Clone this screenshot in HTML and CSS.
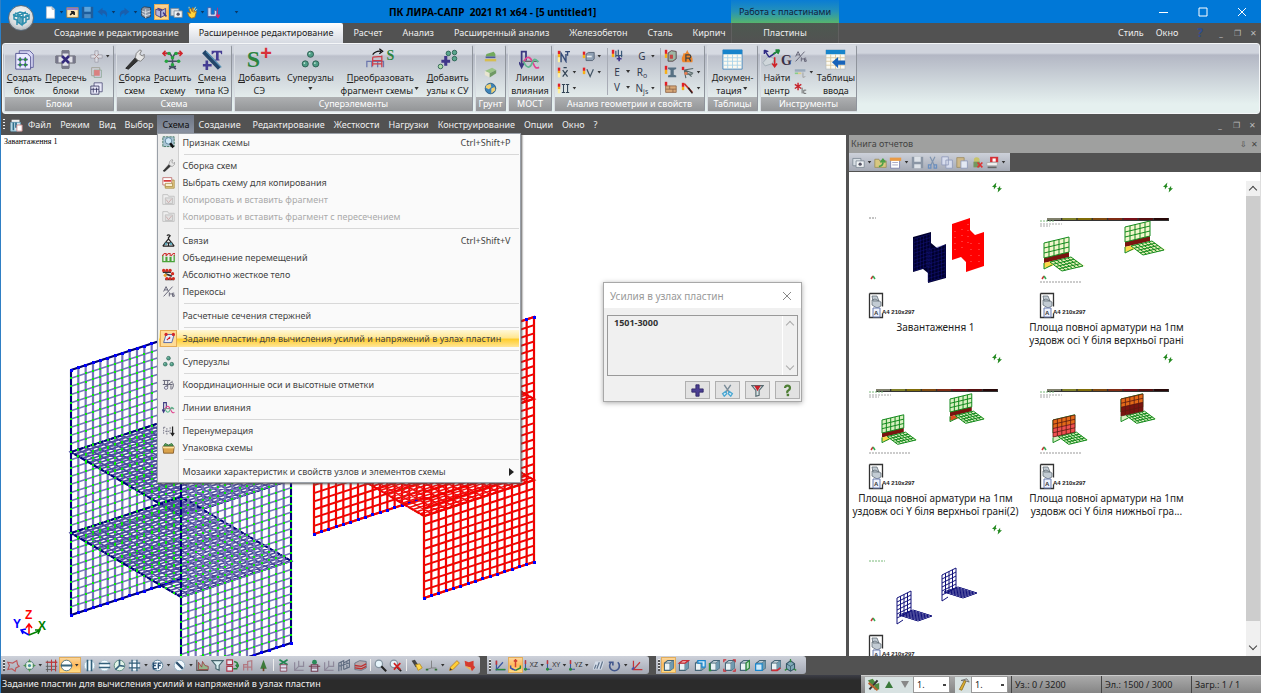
FILE: index.html
```html
<!DOCTYPE html>
<html lang="ru">
<head>
<meta charset="utf-8">
<title>ПК ЛИРА-САПР 2021 R1 x64 - [5 untitled1]</title>
<link rel="stylesheet" href="styles.css">
</head>
<body>
<svg class="sprite" aria-hidden="true">
  <!-- quick access -->
  <symbol id="new" viewBox="0 0 16 16"><path d="M3 1h7l3 3v11H3z" fill="#fff" stroke="#b9c3d0"/><path d="M10 1v3h3" fill="none" stroke="#8a97a8"/></symbol>
  <symbol id="open" viewBox="0 0 16 16"><path d="M1 2h14v12H1z" fill="#ffe9b8" stroke="#a77b32"/><path d="M1 2h14v3H1z" fill="#8f7bc8"/><path d="M5 11l5-4M10 7H6m4 0v4" stroke="#222" stroke-width="2" fill="none"/></symbol>
  <symbol id="save" viewBox="0 0 16 16"><path d="M1 1h14v14H1z" fill="#1d5d9c"/><path d="M4 1h8v6H4z" fill="#5ea5dc"/><path d="M4 10h8v5H4z" fill="#4d8dc4"/></symbol>
  <symbol id="undo" viewBox="0 0 16 16"><path d="M2 7l6-5v3c5 0 7 4 5 9-1-4-3-5-5-5v3z" fill="#195fae"/></symbol>
  <symbol id="redo" viewBox="0 0 16 16"><path d="M14 7L8 2v3c-5 0-7 4-5 9 1-4 3-5 5-5v3z" fill="#195fae"/></symbol>
  <symbol id="stack" viewBox="0 0 16 16"><path d="M5 1l8 1v11l-6 2-5-3V3z" fill="#8995a5" stroke="#333c48"/><path d="M2 6l5 2 6-2M2 9l5 3 6-2M7 4v11" stroke="#e4e9ee" fill="none"/></symbol>
  <symbol id="book" viewBox="0 0 16 16"><path d="M1 4l6 2v8l-6-3zM7 6l6-3v8l-6 3z" fill="#b5b7dc" stroke="#3b3a7e"/><path d="M3 3l6 2M10 8l4 5" stroke="#443a8c" stroke-width="2"/></symbol>
  <symbol id="camera" viewBox="0 0 16 16"><path d="M1 3h10v9H1z" fill="#d9dfe5" stroke="#7b8893"/><path d="M5 6h10v8H5z" fill="#f1f4f6" stroke="#7b8893"/><circle cx="10" cy="10" r="2" fill="#556"/></symbol>
  <symbol id="hand" viewBox="0 0 16 16"><path d="M3 8l2 5 3 2 4-1 2-7-2-1-1 2V3L9 2v5L7 3 5 4l2 5z" fill="#ffd43a" stroke="#b06a14"/><path d="M13 1l-2 4M15 4l-3 2M5 1v2" stroke="#fff2a0"/></symbol>
  <symbol id="chart" viewBox="0 0 16 16"><path d="M1 2h4v8h4V5l3 1v7H1z" fill="#c9d9ef" stroke="#445ca6"/><path d="M1 14h10" stroke="#445ca6"/><path d="M13 2v9M11 11h5l-2.500 4z" stroke="#d8256a" fill="#d8256a"/></symbol>
  <!-- large ribbon icons -->
  <symbol id="blockNew" viewBox="0 0 24 24"><path d="M6 2h12l4 4v15H6z" fill="#d8d8f4" stroke="#5a5a9c"/><path d="M2 5h13l4 4v14H2z" fill="#ececff" stroke="#49498a"/><g stroke="#6a6ac0" stroke-width="1.500"><path d="M4 12h12M4 18h12M7 9v12M13 9v12"/></g><g fill="#2d8a3c"><circle cx="7" cy="12" r="1.800"/><circle cx="13" cy="12" r="1.800"/><circle cx="7" cy="18" r="1.800"/><circle cx="13" cy="18" r="1.800"/></g></symbol>
  <symbol id="cross" viewBox="0 0 24 24"><path d="M8 2h8v6h7v8h-7v6H8v-6H1V8h7z" fill="#e1e1e8" stroke="#50505c"/><path d="M8 2h8v3H8zM8 19h8v3H8zM1 8h3v8H1zM20 8h3v8h-3z" fill="#77778a"/><path d="M8 8l8 8M16 8l-8 8" stroke="#352b7c" stroke-width="3"/></symbol>
  <symbol id="wrench" viewBox="0 0 24 24"><path d="M2 22L13 10l3 3L5 23z" fill="#333" stroke="#222"/><path d="M13 10l1-5 4-4 2 1-2 4 3 2 2-2v4l-4 4-3-1z" fill="#e6e6e6" stroke="#777"/></symbol>
  <symbol id="sew" viewBox="0 0 24 24"><path d="M4 5h5l3 5 3-5h5M12 10v12M5 14h14M8 20h8M8 23l4-3 4 3" fill="none" stroke="#445064" stroke-width="1.800"/><path d="M1 5h5M18 5h5M4 2L1 5l3 3M20 2l3 3-3 3" stroke="#d0242b" stroke-width="1.800" fill="none"/><g fill="#25a43f"><circle cx="8" cy="5" r="2"/><circle cx="16" cy="5" r="2"/><circle cx="12" cy="10" r="2"/><circle cx="5" cy="14" r="2"/><circle cx="19" cy="14" r="2"/><circle cx="12" cy="18" r="2"/></g></symbol>
  <symbol id="typeT" viewBox="0 0 24 24"><path d="M2 3l18 19" stroke="#23466a" stroke-width="5"/><path d="M5 3l17 18" stroke="#5792b4" stroke-width="1.500"/><path d="M11 2h12v4h-1l-1-2h-2v8h1v1h-5v-1h1V4h-2l-2 2h-1zM1 17h3v-4h3v4h4v3H7v4H4v-4H1z" fill="#443c93"/></symbol>
  <symbol id="nodes3" viewBox="0 0 24 24"><g fill="#4f9d86" stroke="#28594d"><circle cx="12" cy="6" r="3.500"/><circle cx="6" cy="17" r="3.500"/><circle cx="18" cy="17" r="3.500"/></g><g fill="#bfe6d6"><circle cx="11" cy="5" r="1"/><circle cx="5" cy="16" r="1"/><circle cx="17" cy="16" r="1"/></g></symbol>
  <symbol id="chair" viewBox="0 0 24 24"><path d="M1 23v-7h20v7M14 16v7M7 16v7" fill="none" stroke="#6b76ad" stroke-width="1.500"/><path d="M8 11v11M19 9v14M8 15h11M8 19h11M8 11l11-1" fill="none" stroke="#cf3c47" stroke-width="1.500"/><path d="M8 8q4-5 10-4M16 1l4 3-4 3" fill="none" stroke="#111" stroke-width="1.500"/></symbol>
  <symbol id="addNodes" viewBox="0 0 24 24"><g fill="#58a58c" stroke="#286050"><circle cx="13" cy="5" r="2.600"/><circle cx="20" cy="4" r="2.600"/><circle cx="20" cy="11" r="2.600"/><circle cx="4" cy="20" r="2.600" fill="#b0dba8"/></g><path d="M10 8v11M5 14h10" stroke="#40368a" stroke-width="3.500"/></symbol>
  <symbol id="influence" viewBox="0 0 24 24"><path d="M3 2v18M0 15l3 6 3-6M3 3h5v10" fill="none" stroke="#3b3880" stroke-width="2"/><path d="M4 14h18" stroke="#333"/><path d="M5 16c4-10 8-7 11 0s4 6 7 5" fill="none" stroke="#e0448f" stroke-width="2"/><path d="M5 14c4 9 8 8 10 2s4-5 7-1" fill="none" stroke="#5eb88e" stroke-width="2"/></symbol>
  <symbol id="tableDoc" viewBox="0 0 24 24"><path d="M1 1h22v22H1z" fill="#fdfaf0" stroke="#4385ba"/><path d="M1 1h22v5H1z" fill="#1784cb"/><path d="M6.500 6v17M12 6v17M17.500 6v17M1 10h22M1 14h22M1 18.500h22" stroke="#a8d2e8"/></symbol>
  <symbol id="centerG" viewBox="0 0 24 24"><path d="M1 18l7-8 8 3-3 6-9 3z" fill="#cfd6da" stroke="#9ba7af"/><path d="M9 11L3 2M9 11l13-9M3 2l0 5M3 2l5 2" stroke="#2e2984" stroke-width="1.800" fill="none"/><path d="M14 7l8-5M22 2l-5 0M22 2l-2 5" stroke="#208a3b" stroke-width="2"/><path d="M16 11v11M13 19l3 4 3-4" stroke="#d02329" stroke-width="2" fill="none"/></symbol>
  <symbol id="tableIn" viewBox="0 0 24 24"><path d="M1 1h22v22H1z" fill="#fdfaf0" stroke="#b4bbc4"/><path d="M1 1h22v5H1z" fill="#1784cb"/><path d="M6.500 6v17M12 6v17M17.500 6v17M1 10h22M1 14h22M1 18.500h22" stroke="#d8c8a0"/><path d="M8 15l7-6v4h8v5h-8v4z" fill="#1763b9"/></symbol>
  <!-- small ribbon icons -->
  <symbol id="xsmall" viewBox="0 0 16 16"><path d="M6 1h4v5h5v4h-5v5H6v-5H1V6h5z" fill="#dcdce2" stroke="#a0a0ac"/><path d="M5 5l6 6M11 5l-6 6" stroke="#a88" /></symbol>
  <symbol id="sq" viewBox="0 0 16 16"><path d="M2 2h10v10H2z" fill="#cfcfd6" stroke="#9d9c90"/><path d="M5 5h9v9H5z" fill="#ccd" stroke="#8aa894"/><path d="M5 5h7v7H5z" fill="#d98080"/></symbol>
  <symbol id="blocks3" viewBox="0 0 16 16"><path d="M5 1h10v11H5z" fill="#e8e8f8" stroke="#4d4d78"/><path d="M1 5h10v10H1z" fill="#e8e8f8" stroke="#33335c"/><path d="M4 7v6M8 7v6M1 9h10" stroke="#33335c"/></symbol>
  <symbol id="soil" viewBox="0 0 16 16"><path d="M3 5l9-3 2 3v3H2z" fill="#72a95d"/><path d="M2 8h12v2H2z" fill="#4d5b9b"/><path d="M1 11h14v3H1z" fill="#d6bd50"/></symbol>
  <symbol id="brick" viewBox="0 0 16 16"><path d="M1 6l9-4 5 3-8 4z" fill="#9ac487"/><path d="M1 6l6 3v5l-6-3z" fill="#e8e5d0"/><path d="M7 9l8-4v4l-8 5z" fill="#6f9964"/></symbol>
  <symbol id="globe" viewBox="0 0 16 16"><circle cx="8" cy="8" r="6.500" fill="#3d83b8" stroke="#23567c"/><path d="M3 4l5-2 1 4-3 3-4-2zM9 8l4-2 1 4-5 4z" fill="#f1d070"/></symbol>
  <symbol id="barN" viewBox="0 0 16 16"><path d="M1 1h3v4H1z" fill="#e21f26"/><path d="M1 5h3v4H1z" fill="#f7b018"/><path d="M1 9h3v6H1z" fill="#fff0a0"/><path d="M5 15V4l6 10V5M10 2h6M13 2v5" fill="none" stroke="#344a78" stroke-width="1.700"/></symbol>
  <symbol id="barX" viewBox="0 0 16 16"><path d="M1 2h3v4H1z" fill="#e21f26"/><path d="M1 6h3v3H1z" fill="#f7b018"/><path d="M1 9h3v5H1z" fill="#fff0a0"/><path d="M7 5l6 8M13 5l-6 8M8 2h4" stroke="#345" stroke-width="1.500"/></symbol>
  <symbol id="barI" viewBox="0 0 16 16"><path d="M1 2h3v4H1z" fill="#e21f26"/><path d="M1 6h3v3H1z" fill="#f7b018"/><path d="M1 9h3v5H1z" fill="#fff0a0"/><path d="M6 3h4M6 13h4M11 3h4M11 13h4M8 3v10M13 3v10" stroke="#345" stroke-width="1.300"/></symbol>
  <symbol id="barS" viewBox="0 0 16 16"><path d="M1 2h3v4H1z" fill="#e21f26"/><path d="M1 6h3v4H1z" fill="#f7b018"/><path d="M5 5l3-2h7v8l-2 2H5z" fill="#8fa0b4" stroke="#4c5a6c"/><path d="M6 8h6" stroke="#e9edf0" stroke-width="2"/></symbol>
  <symbol id="barV" viewBox="0 0 16 16"><path d="M1 2h3v4H1z" fill="#e21f26"/><path d="M1 6h3v4H1z" fill="#f7b018"/><path d="M6 4l4 9 4-9" fill="none" stroke="#456" stroke-width="1.500"/></symbol>
  <symbol id="bars" viewBox="0 0 16 16"><path d="M1 1h3v5H1z" fill="#e21f26"/><path d="M1 6h3v4H1z" fill="#f7b018"/><path d="M6 2v8M9 1v9M13 2v8M6 8h8" stroke="#3a5878" stroke-width="1.500"/><path d="M10 9v6M7 12h6" stroke="#40368a" stroke-width="2"/></symbol>
  <symbol id="cube" viewBox="0 0 16 16"><path d="M1 1h3v5H1z" fill="#e21f26"/><path d="M1 6h3v5H1z" fill="#f7b018"/><path d="M5 5l4-3 6 1v9l-4 3H5z" fill="#9db6a4" stroke="#4d3438"/><path d="M7 7h4v5H7z" fill="#c34545"/></symbol>
  <symbol id="beamI" viewBox="0 0 16 16"><path d="M1 1h3v5H1z" fill="#e21f26"/><path d="M1 6h3v5H1z" fill="#f7b018"/><path d="M5 3h10v2l-3 1v6l3 1v2H5v-2l3-1V6L5 5z" fill="#577083"/></symbol>
  <symbol id="wall" viewBox="0 0 16 16"><path d="M1 1h3v5H1z" fill="#e21f26"/><path d="M2 6h13v8H2z" fill="#d8a878" stroke="#8c6246"/><path d="M2 10h13M7 6v4M11 10v4" stroke="#8c6246"/></symbol>
  <symbol id="fireR" viewBox="0 0 16 16"><path d="M2 15C-1 9 3 8 3 4c4 1 3-2 5-4 0 5 8 6 6 15z" fill="#f0862a"/><path d="M6 14V6h4q2 0 2 2t-2 2H6m4 0l2 4" fill="none" stroke="#444" stroke-width="1.500"/></symbol>
  <symbol id="rays" viewBox="0 0 16 16"><path d="M1 1h3v4H1z" fill="#e21f26"/><path d="M4 5l11-2M4 5l9 8M4 5l2 10M5 10h9M4 5l11 4" fill="none" stroke="#566" stroke-width="1.300"/><circle cx="6" cy="9" r="2" fill="#e57c52"/></symbol>
  <symbol id="diag" viewBox="0 0 16 16"><path d="M1 1h3v5H1z" fill="#e21f26"/><path d="M1 6h3v4H1z" fill="#f7b018"/><path d="M4 2l10 11" stroke="#c83227" stroke-width="2"/><path d="M9 7l5 7" stroke="#322" stroke-width="2"/></symbol>
  <symbol id="skew" viewBox="0 0 16 16"><path d="M2 14L13 2M2 8l3-6 3 6M3 6h4M9 9v5M9 11h4v3M15 10h-2v2h2v2h-2" fill="none" stroke="#667" stroke-width="1.200"/></symbol>
  <symbol id="legend" viewBox="0 0 16 16"><path d="M1 4h13v3H1z" fill="#9ab"/><path d="M1 8h4v2H1z" fill="#8c8"/><path d="M5 8h4v2H5z" fill="#dc8"/><path d="M11 8v6l3-1" stroke="#999" fill="none"/></symbol>
  <symbol id="starIc" viewBox="0 0 16 16"><path d="M5 1v9M1 3l8 5M9 3L1 8" stroke="#c7232b" stroke-width="1.800"/><path d="M10 7v7M15 10h-3v4h3" stroke="#555" fill="none"/></symbol>
  <!-- menu icons -->
  <symbol id="mSign" viewBox="0 0 16 16"><path d="M1 1h14v12H1z" fill="#a9c5d3" stroke="#336b54" stroke-dasharray="3 1"/><circle cx="8" cy="6" r="4" fill="#cfe8f8" stroke="#4d7890"/><path d="M10 9l4 5" stroke="#111" stroke-width="3"/></symbol>
  <symbol id="mSheets" viewBox="0 0 16 16"><path d="M4 5h11v10H4z" fill="#e4cf8a" stroke="#aa8b45"/><path d="M1 2h11v9H1z" fill="#fff" stroke="#b66"/><path d="M2 5h9v2H2z" fill="#d32d2d"/><path d="M4 9h9v4H4z" fill="#f8efd0" stroke="#aa8b45"/></symbol>
  <symbol id="mGray" viewBox="0 0 16 16"><path d="M1 2h6l1 2h7v10H1z" fill="#eee" stroke="#bbb"/><path d="M4 6h9v7H4z" fill="#e0e0e0" stroke="#bbb"/><path d="M5 8l3 4 4-5" stroke="#c9a4a4" fill="none"/></symbol>
  <symbol id="mTie" viewBox="0 0 16 16"><path d="M6 2q2-2 4 0-1 2-2 2v3M8 6l-4 5h8zM1 15h14M4 11l-3 4M12 11l3 4M8 11v4" stroke="#222" stroke-width="1.500" fill="none"/><circle cx="5" cy="12" r="1.500" fill="#5aa5b8"/><circle cx="11" cy="12" r="1.500" fill="#5aa5b8"/></symbol>
  <symbol id="mJoin" viewBox="0 0 16 16"><path d="M1 5v8h4V7M6 7v6h4V7M11 7v6h4V5" fill="none" stroke="#49a338" stroke-width="1.600"/><path d="M0 6l3-3h2v3M5 6l3-3h2v3M11 6l3-3h2v3" stroke="#d03030" stroke-width="1.300" fill="none"/></symbol>
  <symbol id="mRigid" viewBox="0 0 16 16"><path d="M1 5h10M4 7l8 3M4 14h11" stroke="#333" stroke-width="2"/><g fill="#d22a1f"><circle cx="2" cy="3" r="2"/><circle cx="6" cy="3" r="2"/><circle cx="10" cy="3" r="2"/><circle cx="13" cy="7" r="2"/><circle cx="4" cy="9" r="2" fill="#e8a12b"/><circle cx="6" cy="13" r="2"/><circle cx="10" cy="13" r="2"/><circle cx="14" cy="13" r="2"/></g></symbol>
  <symbol id="mPlate" viewBox="0 0 16 16"><path d="M5 3h10l-3 10H2z" fill="#e9eef9" stroke="#3b55a0"/><g fill="#d3242a"><circle cx="5" cy="3" r="2"/><circle cx="14" cy="3" r="2"/></g><path d="M6 10l4-4M8 8h2" stroke="#d3242a" stroke-width="1.500"/></symbol>
  <symbol id="mAxes" viewBox="0 0 16 16"><path d="M1 3h9M3 3v5M7 3v8M1 8h12M3 12l10-8M11 9v5M12 5q4 3 0 9" fill="none" stroke="#667" stroke-width="1.200"/><circle cx="5" cy="12" r="2" fill="#eef" stroke="#667"/></symbol>
  <symbol id="mNum" viewBox="0 0 16 16"><path d="M2 4v9M2 4h3M6 5v8M10 4v9M4 9h5" stroke="#667" fill="none" stroke-dasharray="2 1"/><path d="M13 3v10M11 11l2 3 2-3" stroke="#222" stroke-width="1.500" fill="none"/></symbol>
  <symbol id="mBox" viewBox="0 0 16 16"><path d="M1 7h14l-1 8H2z" fill="#d9a24b" stroke="#7d5320"/><path d="M2 6l2-3 4 2 4-2 2 3z" fill="#5fa55b" stroke="#2c6632"/><path d="M1 8h14" stroke="#fbe29c" stroke-width="2"/></symbol>
  <!-- view toolbar -->
  <symbol id="poly" viewBox="0 0 16 16"><path d="M1 4l6 1 5-3 1 5 2 2-4 2-1 4-4-3-5 1 2-5z" fill="none" stroke="#bc5658" stroke-width="1.400"/></symbol>
  <symbol id="target" viewBox="0 0 16 16"><circle cx="8" cy="8" r="5" fill="#e9f6e9" stroke="#456b7a"/><path d="M8 0l2 4H6zM8 16l2-4H6zM0 8l4-2v4zM16 8l-4-2v4z" fill="#4e9253"/><circle cx="8" cy="8" r="2" fill="#4b91a4"/></symbol>
  <symbol id="grid" viewBox="0 0 16 16"><path d="M3 2v14M8 1v14M13 1v14M1 4h14M1 9h14M1 13h12" stroke="#555"/><path d="M1 4h14M8 1v14M13 1v14" stroke="#c43538" stroke-width="1.300"/></symbol>
  <symbol id="cH" viewBox="0 0 16 16"><circle cx="8" cy="8" r="6.500" fill="#fff" stroke="#39647c"/><path d="M1 8h14" stroke="#39647c" stroke-width="2.500"/></symbol>
  <symbol id="cV2" viewBox="0 0 16 16"><circle cx="8" cy="8" r="6.500" fill="#f4fbff" stroke="#a9c4d1"/><path d="M5.500 1v14M10.500 1v14" stroke="#335f7a" stroke-width="2"/></symbol>
  <symbol id="cH2" viewBox="0 0 16 16"><circle cx="8" cy="8" r="6.500" fill="#f4fbff" stroke="#a9c4d1"/><path d="M1 5.500h14M1 10.500h14" stroke="#335f7a" stroke-width="2"/></symbol>
  <symbol id="cArr" viewBox="0 0 16 16"><circle cx="8" cy="8" r="6.500" fill="#e4f5e9" stroke="#4c7f73"/><path d="M8 1v7l6 1M8 8l-5 5" stroke="#335f7a" stroke-width="2" fill="none"/></symbol>
  <symbol id="cHash" viewBox="0 0 16 16"><circle cx="8" cy="8" r="6.500" fill="#f4fbff" stroke="#a9c4d1"/><path d="M5 1v14M11 1v14M1 5h14M1 11h14" stroke="#335f7a" stroke-width="1.600"/></symbol>
  <symbol id="cEF" viewBox="0 0 16 16"><circle cx="8" cy="8" r="6.500" fill="#f4fbff" stroke="#49728b"/><path d="M7 5H3v7h4M3 8h3M13 5H9v7M9 8h3" stroke="#234b70" stroke-width="1.600" fill="none"/></symbol>
  <symbol id="cPen" viewBox="0 0 16 16"><circle cx="8" cy="8" r="6.500" fill="#f4fbff" stroke="#89a9bd"/><path d="M4 4l8 8" stroke="#2b4f6e" stroke-width="3"/></symbol>
  <symbol id="loads" viewBox="0 0 16 16"><path d="M1 1v13h14" stroke="#555" stroke-width="1.500" fill="none"/><path d="M3 13V4l4 6 1-7 3 5 4 1v4z" fill="#95b68b" stroke="#9a3b3b"/></symbol>
  <symbol id="funnel" viewBox="0 0 16 16"><path d="M1 2h14L10 8v6l-4-2V8z" fill="#d8eef0" stroke="#47676f" stroke-width="1.400"/></symbol>
  <symbol id="funnelR" viewBox="0 0 16 16"><path d="M1 2h14L10 8v6l-4 1V8z" fill="#d8e4e6" stroke="#566a70" stroke-width="1.400"/><path d="M4 2h8L8 9z" fill="#c72029"/></symbol>
  <symbol id="swap" viewBox="0 0 16 16"><path d="M1 1h7v6H1zM1 9h7v6H1z" fill="#e6e8f4" stroke="#aa3548" stroke-width="1.400"/><path d="M10 3q5 1 4 5M12 7l2 3 2-3M9 12h5" stroke="#28823c" stroke-width="2" fill="none"/></symbol>
  <symbol id="frameR" viewBox="0 0 16 16"><path d="M2 14V7h5v7M7 14V3l5-1v12M2 10h10" fill="none" stroke="#b27982" stroke-width="1.500"/></symbol>
  <symbol id="frameG" viewBox="0 0 16 16"><path d="M2 4v10h11M7 2v7h6V3M2 14l5-5" fill="none" stroke="#8f8a9c" stroke-width="1.500"/></symbol>
  <symbol id="tree" viewBox="0 0 16 16"><path d="M8 1l4 11H4z" fill="#3d7a3a"/><path d="M8 11v4" stroke="#6c4426" stroke-width="2"/></symbol>
  <symbol id="cutX" viewBox="0 0 16 16"><path d="M3 1l10 6M13 1L3 7" stroke="#228652" stroke-width="2"/><path d="M4 7h8v8H4zM4 11h8" fill="#dde" stroke="#803d50"/></symbol>
  <symbol id="cutN" viewBox="0 0 16 16"><circle cx="8" cy="4" r="3" fill="#2a8a58"/><path d="M4 7h8v8H4zM4 11h8M1 9h14" fill="#dde" stroke="#703d50" stroke-width="1.300"/></symbol>
  <symbol id="frames" viewBox="0 0 16 16"><path d="M1 15V5l6-3v11M7 13l7-3V1L7 5M1 9l13-4M4 14V4M11 12V3" fill="none" stroke="#606c80" stroke-width="1.400"/></symbol>
  <symbol id="framesR" viewBox="0 0 16 16"><path d="M1 5l6-3 8 1v8l-6 3-8-1z" fill="#b5a8ad" stroke="#606c80"/><path d="M1 8l8 1 6-3M1 11l8 1 6-3" fill="none" stroke="#bf3030" stroke-width="1.600"/></symbol>
  <symbol id="zoom" viewBox="0 0 16 16"><circle cx="6" cy="6" r="4.500" fill="#e6f4fb" stroke="#8594a0" stroke-width="1.500"/><path d="M9 9l6 6" stroke="#222" stroke-width="2.500"/></symbol>
  <symbol id="zoomX" viewBox="0 0 16 16"><circle cx="6" cy="6" r="4.500" fill="#e6f4fb" stroke="#8594a0" stroke-width="1.500"/><path d="M9 9l6 6" stroke="#222" stroke-width="2"/><path d="M6 5l8 8M14 5l-8 8" stroke="#d02020" stroke-width="2"/></symbol>
  <symbol id="torch" viewBox="0 0 16 16"><path d="M2 2l4-1 4 6-3 3z" fill="#444"/><path d="M7 7l5-1 3 5-5 3z" fill="#ffd84a" stroke="#b68b1d"/></symbol>
  <symbol id="dots" viewBox="0 0 16 16"><path d="M8 2v9h6M8 11l-6 2" stroke="#777" fill="none"/><path d="M1 12h3v2H1zM12 12h3v2h-3z" fill="#34733a"/></symbol>
  <symbol id="pencil" viewBox="0 0 16 16"><path d="M2 14l1-4L11 2l3 3-8 8z" fill="#ffcf35" stroke="#b9781a"/><path d="M2 14l1-3 2 2z" fill="#333"/></symbol>
  <symbol id="flag" viewBox="0 0 16 16"><path d="M2 2l5 2 6-2v6l2 2-4 5-2-5-6-1z" fill="#d63a2d"/><path d="M2 9l7 1 1 4z" fill="#f2b24d"/></symbol>
  <symbol id="ax" viewBox="0 0 16 16"><path d="M3 2v11l8-9M3 13h11" fill="none" stroke="#3b55a0" stroke-width="1.500"/><path d="M2 13h12" stroke="#2a8a3c" stroke-width="1.800"/><path d="M3 2v5" stroke="#c43538" stroke-width="2"/></symbol>
  <symbol id="axP" viewBox="0 0 8 16"><path d="M2 1v12h6" fill="none" stroke="#3b55a0" stroke-width="1.500"/><path d="M2 1v5" stroke="#c43538" stroke-width="2"/><circle cx="2" cy="13" r="2" fill="#2a8a3c"/></symbol>
  <symbol id="axR" viewBox="0 0 16 16"><path d="M3 2v11h11M3 13l8-9" fill="none" stroke="#c43538" stroke-width="1.500"/><path d="M1 13l3-3" stroke="#4054a8" stroke-width="2"/></symbol>
  <symbol id="iso" viewBox="0 0 16 16"><path d="M8 1v9M6 3l2-2 2 2" stroke="#d04030" stroke-width="1.800" fill="none"/><path d="M8 14L2 11l0-3M2 11l3 2" stroke="#3c50a8" stroke-width="1.800" fill="none"/><path d="M8 14l6-3V8" stroke="#2a8a3c" stroke-width="1.800" fill="none"/></symbol>
  <symbol id="plane" viewBox="0 0 16 16"><path d="M4 3h11l-3 10H1z" fill="#d4dde9"/><path d="M3 12l2-5M6 12l3-8M10 12l3-9" stroke="#63758c" stroke-width="1.500"/></symbol>
  <symbol id="rot" viewBox="0 0 16 16"><path d="M4 4a6 6 0 1 0 8 0M1 4h5v4" fill="none" stroke="#42578c" stroke-width="2"/></symbol>
  <symbol id="box3" viewBox="0 0 16 16"><path d="M3 5l4-3h7v9l-4 3H3z" fill="#eaf2f5" stroke="#456577" stroke-width="1.300"/><path d="M3 5h7v9M10 5l4-3" fill="none" stroke="#456577" stroke-width="1.300"/><path d="M10 5l4-3v9l-4 3z" fill="#6f9ab0"/></symbol>
  <symbol id="boxTop" viewBox="0 0 16 16"><use href="#box3"/><path d="M3 5l4-3h7l-4 3z" fill="#f4c8c8" stroke="#cb2c35" stroke-width="1.500"/></symbol>
  <symbol id="boxBot" viewBox="0 0 16 16"><use href="#box3"/><path d="M3 14h7l4-3" fill="none" stroke="#cb2c35" stroke-width="2"/></symbol>
  <symbol id="boxBack" viewBox="0 0 16 16"><use href="#box3"/><path d="M6 2h9v8h-4V5H6z" fill="#cfeafa" stroke="#1784cb" stroke-width="1.500"/></symbol>
  <symbol id="boxFront" viewBox="0 0 16 16"><use href="#box3"/><path d="M2 6h8v8H2z" fill="#cfeafa" stroke="#1784cb" stroke-width="1.500"/></symbol>
  <symbol id="boxL" viewBox="0 0 16 16"><use href="#box3"/><path d="M2 5v9h2" fill="none" stroke="#2d8a3c" stroke-width="2"/></symbol>
  <symbol id="boxR" viewBox="0 0 16 16"><use href="#box3"/><path d="M10 5l4-3v9l-4 3z" fill="#bfe5c5" stroke="#2d8a3c" stroke-width="1.500"/></symbol>
  <symbol id="boxAll" viewBox="0 0 16 16"><use href="#box3"/><path d="M1 4V1h3M12 1h3v3M15 12v3h-3M4 15H1v-3" fill="none" stroke="#cb2c35" stroke-width="1.500"/></symbol>
  <symbol id="boxIso" viewBox="0 0 16 16"><path d="M8 2l5 4v6l-5 3-5-3V6z" fill="#7fa9b8" stroke="#345566" stroke-width="1.300"/><path d="M3 6l5 3 5-3M8 9v6" fill="none" stroke="#345566"/><path d="M8 0v4M1 14l3-2M15 14l-3-2" stroke="#2d8a3c" stroke-width="1.500"/></symbol>
  <symbol id="hammer" viewBox="0 0 16 16"><path d="M5 3l7-2 3 4-3-1z" fill="#ccc" stroke="#666"/><path d="M9 3l2 1-5 11-3-1z" fill="#e0b030" stroke="#8a6c20"/></symbol>
  <symbol id="stateIc" viewBox="0 0 16 16"><path d="M1 3l6-2 3 4-4 4zM9 8l6-2v8H9z" fill="#4f8a3f"/><path d="M3 14L13 3" stroke="#333" stroke-width="2.500"/><path d="M2 6l11 9" stroke="#b5622c" stroke-width="2.500"/></symbol>
  <symbol id="bolt" viewBox="0 0 16 16"><path d="M7 0L0 7h3v4l3-4h2L6 5z" fill="#23891f"/><path d="M9 16l7-7h-3V5l-3 4H8l2 2z" fill="#23891f"/></symbol>
  <symbol id="trash" viewBox="0 0 16 16"><circle cx="7" cy="5" r="3.500" fill="#c7c36a"/><path d="M3 7h8v7H3z" fill="#75975f"/><path d="M8 8l6 6M14 8l-6 6" stroke="#d33" stroke-width="2"/></symbol>
  <symbol id="scis" viewBox="0 0 16 16"><path d="M4 1l6 9M12 1L6 10" stroke="#7a8c98" stroke-width="1.800"/><path d="M6 9l-4 3 2 3 3-3zM10 9l4 3-2 3-3-3z" fill="#d6eef8" stroke="#4ba7d2" stroke-width="1.600"/></symbol>
  <symbol id="plus" viewBox="0 0 16 16"><path d="M6 1h4v5h5v4h-5v5H6v-5H1V6h5z" fill="#4b3f92" stroke="#2c2462"/></symbol>
  <symbol id="help" viewBox="0 0 16 16"><path d="M5 5q0-3 3-3t3 3q0 2-2 3t-1 3" fill="none" stroke="#4e7e34" stroke-width="2.800"/><path d="M7 12h3v3H7z" fill="#4e7e34"/></symbol>
  <symbol id="folderUp" viewBox="0 0 16 16"><path d="M1 4h5l1 2h8v8H1z" fill="#d8c880" stroke="#9a8c5a"/><path d="M6 13q6-1 5-7M8 8l3-4 3 4" stroke="#4a9f46" stroke-width="2" fill="none"/></symbol>
  <symbol id="sheetNew" viewBox="0 0 16 16"><path d="M2 4h11v11H2z" fill="#fff" stroke="#777ba8"/><path d="M1 2h14v4H1z" fill="#e99a45"/><path d="M4 8h7M4 11h7" stroke="#99b"/></symbol>
  <symbol id="disk" viewBox="0 0 16 16"><path d="M1 1h14v14H1z" fill="#8b96a5"/><path d="M4 1h8v6H4zM4 10h8v5H4z" fill="#dde2e8"/></symbol>
  <symbol id="cutGray" viewBox="0 0 16 16"><path d="M5 1l5 10M11 1L6 11" stroke="#8095b0" stroke-width="1.500"/><path d="M3 11h3v4H3zM10 11h3v4h-3z" fill="none" stroke="#6a8fc0" stroke-width="1.500"/></symbol>
  <symbol id="copy" viewBox="0 0 16 16"><path d="M1 1h8v10H1zM6 5h8v10H6z" fill="#d7dded" stroke="#8c97b8"/></symbol>
  <symbol id="paste" viewBox="0 0 16 16"><path d="M1 2h9v12H1z" fill="#cdb88a" stroke="#9c8c64"/><path d="M6 6h8v9H6z" fill="#e3e9f3" stroke="#8c97b8"/></symbol>
  <symbol id="printR" viewBox="0 0 16 16"><path d="M5 1h10v7H5z" fill="#d52f35"/><path d="M8 3h4v4H8z" fill="#fff"/><path d="M1 8h13v4H1z" fill="#eee" stroke="#aaa"/><path d="M2 13h11v2H2z" fill="#666"/></symbol>
  <symbol id="docApp" viewBox="0 0 16 16"><path d="M3 2h9v3H3z" fill="#eee"/><path d="M2 5h11v10H2z" fill="#cfe6f0" stroke="#6ea3bc"/><path d="M5 5v9M8 5v6" stroke="#31708c" stroke-width="2"/><path d="M9 8h6v7H9z" fill="#fff" stroke="#c88"/></symbol>
</svg>

<div class="app">
  <header class="titlebar">
    <div class="quick">
      <button class="ib" aria-label="Новый"><svg><use href="#new"/></svg></button><i class="dd"></i>
      <button class="ib" aria-label="Открыть"><svg><use href="#open"/></svg></button>
      <button class="ib" aria-label="Сохранить"><svg><use href="#save"/></svg></button>
      <button class="ib" aria-label="Отменить"><svg><use href="#undo"/></svg></button><i class="dd"></i>
      <button class="ib" aria-label="Повторить"><svg><use href="#redo"/></svg></button><i class="dd"></i>
      <button class="ib" aria-label="Модель"><svg><use href="#stack"/></svg></button>
      <button class="ib on" aria-label="Книга отчетов"><svg><use href="#book"/></svg></button>
      <button class="ib" aria-label="Снимок"><svg><use href="#camera"/></svg></button>
      <button class="ib" aria-label="Выбор"><svg><use href="#hand"/></svg></button><i class="dd"></i>
      <button class="ib" aria-label="Диаграмма"><svg><use href="#chart"/></svg></button><i class="dd last"></i>
    </div>
    <h1 class="title">ПК ЛИРА-САПР&nbsp; 2021 R1 x64 - [5 untitled1]</h1>
    <div class="context">Работа с пластинами</div>
    <div class="wincontrols">
      <button aria-label="Свернуть"><svg viewBox="0 0 10 10"><path d="M0 5.500h9"/></svg></button>
      <button aria-label="Развернуть"><svg viewBox="0 0 10 10"><path d="M1 1h8v8H1z"/></svg></button>
      <button aria-label="Закрыть"><svg viewBox="0 0 10 10"><path d="M1 1l8 8M9 1L1 9"/></svg></button>
    </div>
  </header>
  <button class="orb" aria-label="Меню приложения"><svg viewBox="0 0 24 24"><g fill="none" stroke="#2f8fae" stroke-width="1.500"><path d="M4 9l7-3 8 2M5 9v4l3 1v5M9 7v9l4 3v-9M14 7v11l3-2V9M4 9l10 3 6-3v4l-3 1M6 7l5 2 6-3M11 9v8"/></g></svg></button>

  <nav class="tabs">
    <button>Создание и редактирование</button>
    <button class="active">Расширенное редактирование</button>
    <button>Расчет</button><button>Анализ</button><button>Расширенный анализ</button><button>Железобетон</button><button>Сталь</button><button>Кирпич</button><button class="ctx">Пластины</button>
    <div class="tabs-right">
      <button>Стиль</button><button>Окно</button><b class="q">?</b>
      <div class="mdi"><button aria-label="Свернуть окно">_</button><button aria-label="Восстановить окно">❐</button><button aria-label="Закрыть окно">✕</button></div>
    </div>
  </nav>

  <section class="ribbon">
    <div class="group g-blocks"><div class="body">
      <button class="big"><svg><use href="#blockNew"/></svg><span><u>С</u>оздать<br>блок</span></button>
      <button class="big"><svg><use href="#cross"/></svg><span><u>П</u>ересечь<br>блоки</span></button>
      <div class="col"><button class="sm" aria-label="Пересечение"><svg><use href="#xsmall"/></svg><i class="dd"></i></button><button class="sm" aria-label="Разность"><svg><use href="#sq"/></svg></button><button class="sm" aria-label="Список блоков"><svg><use href="#blocks3"/></svg></button></div>
    </div><h2>Блоки</h2></div>
    <div class="group g-scheme"><div class="body">
      <button class="big"><svg><use href="#wrench"/></svg><span><u>С</u>борка<br>схем</span></button>
      <button class="big"><svg><use href="#sew"/></svg><span><u>Р</u>асшить<br>схему</span></button>
      <button class="big"><svg><use href="#typeT"/></svg><span><u>С</u>мена<br>типа КЭ</span></button>
    </div><h2>Схема</h2></div>
    <div class="group g-super"><div class="body">
      <button class="big"><b class="s">S<sup>+</sup></b><span><u>Д</u>обавить<br>СЭ</span></button>
      <button class="big"><svg><use href="#nodes3"/></svg><span>Суперузлы<br><i class="dd"></i></span></button>
      <button class="big"><b class="s small"><svg><use href="#chair"/></svg>S</b><span><u>П</u>реобразовать<br>фрагмент схемы<i class="dd"></i></span></button>
      <button class="big"><svg><use href="#addNodes"/></svg><span><u>Д</u>обавить<br>узлы к СУ</span></button>
    </div><h2>Суперэлементы</h2></div>
    <div class="group g-soil"><div class="body">
      <div class="col"><button class="sm" aria-label="Слои"><svg><use href="#soil"/></svg></button><button class="sm" aria-label="Блок грунта"><svg><use href="#brick"/></svg></button><button class="sm" aria-label="Карта"><svg><use href="#globe"/></svg></button></div>
    </div><h2>Грунт</h2></div>
    <div class="group g-bridge"><div class="body">
      <button class="big"><svg><use href="#influence"/></svg><span>Линии<br>влияния</span></button>
    </div><h2>МОСТ</h2></div>
    <div class="group g-analysis"><div class="body">
      <div class="col"><button class="sm" aria-label="Нагрузки"><svg><use href="#barN"/></svg></button><button class="sm" aria-label="Координаты"><svg><use href="#barX"/></svg><i class="dd"></i></button><button class="sm" aria-label="Жесткости"><svg><use href="#barI"/></svg><i class="dd"></i></button></div>
      <div class="col"><button class="sm" aria-label="Пластины"><svg><use href="#barS"/></svg><i class="dd"></i></button><button class="sm" aria-label="Объем"><svg><use href="#barV"/></svg><i class="dd"></i></button></div>
      <div class="col line"><button class="sm" aria-label="Стержни"><svg><use href="#bars"/></svg></button><button class="sm"><span>E</span><i class="dd"></i></button><button class="sm"><span>V</span><i class="dd"></i></button></div>
      <div class="col"><button class="sm"><span>G</span><i class="dd"></i></button><button class="sm"><span>R<sub>o</sub></span></button><button class="sm"><span>N<sub>js</sub></span><i class="dd"></i></button></div>
      <div class="col line"><button class="sm" aria-label="Арматура"><svg><use href="#cube"/></svg></button><button class="sm" aria-label="Сталь"><svg><use href="#beamI"/></svg></button><button class="sm" aria-label="Кладка"><svg><use href="#wall"/></svg></button></div>
      <div class="col"><button class="sm" aria-label="Огнестойкость"><svg><use href="#fireR"/></svg></button><button class="sm" aria-label="Лучи"><svg><use href="#rays"/></svg><i class="dd"></i></button><button class="sm" aria-label="Стержень"><svg><use href="#diag"/></svg><i class="dd"></i></button></div>
    </div><h2>Анализ геометрии и свойств</h2></div>
    <div class="group g-tables"><div class="body">
      <button class="big"><svg><use href="#tableDoc"/></svg><span>Докумен-<br>тация<i class="dd"></i></span></button>
    </div><h2>Таблицы</h2></div>
    <div class="group g-tools"><div class="body">
      <button class="big"><b class="s dark"><svg><use href="#centerG"/></svg>G</b><span>Найти<br>центр</span></button>
      <div class="col"><button class="sm" aria-label="Перекосы"><svg><use href="#skew"/></svg></button><button class="sm" aria-label="Шкала"><svg><use href="#legend"/></svg><i class="dd"></i></button><button class="sm" aria-label="Узлы"><svg><use href="#starIc"/></svg></button></div>
      <button class="big"><svg><use href="#tableIn"/></svg><span>Таблицы<br>ввода</span></button>
    </div><h2>Инструменты</h2></div>
  </section>

  <nav class="menubar">
    <i class="grip"></i><svg class="app-icon"><use href="#docApp"/></svg>
    <button>Файл</button><button>Режим</button><button>Вид</button><button>Выбор</button>
    <div class="open"><button>Схема</button>
      <ul class="menu">
        <li><button><svg><use href="#mSign"/></svg>Признак схемы<kbd>Ctrl+Shift+P</kbd></button></li>
        <li class="sep"><button><svg><use href="#wrench"/></svg>Сборка схем</button></li>
        <li><button><svg><use href="#mSheets"/></svg>Выбрать схему для копирования</button></li>
        <li><button disabled><svg><use href="#mGray"/></svg>Копировать и вставить фрагмент</button></li>
        <li><button disabled><svg><use href="#mGray"/></svg>Копировать и вставить фрагмент с пересечением</button></li>
        <li class="sep major"><button><svg><use href="#mTie"/></svg>Связи<kbd>Ctrl+Shift+V</kbd></button></li>
        <li><button><svg><use href="#mJoin"/></svg>Объединение перемещений</button></li>
        <li><button><svg><use href="#mRigid"/></svg>Абсолютно жесткое тело</button></li>
        <li><button><svg><use href="#skew"/></svg>Перекосы</button></li>
        <li class="sep major"><button><svg></svg>Расчетные сечения стержней</button></li>
        <li class="sep"><button class="hot"><svg><use href="#mPlate"/></svg>Задание пластин для вычисления усилий и напряжений в узлах пластин</button></li>
        <li class="sep"><button><svg><use href="#nodes3"/></svg>Суперузлы</button></li>
        <li class="sep"><button><svg><use href="#mAxes"/></svg>Координационные оси и высотные отметки</button></li>
        <li class="sep"><button><svg><use href="#influence"/></svg>Линии влияния</button></li>
        <li class="sep"><button><svg><use href="#mNum"/></svg>Перенумерация</button></li>
        <li><button><svg><use href="#mBox"/></svg>Упаковка схемы</button></li>
        <li class="sep major"><button><svg></svg>Мозаики характеристик и свойств узлов и элементов схемы<i class="sub"></i></button></li>
      </ul>
    </div>
    <button>Создание</button><button class="after">Редактирование</button><button>Жесткости</button><button>Нагрузки</button><button>Конструирование</button><button>Опции</button><button>Окно</button><button>?</button>
    <div class="mdi"><button aria-label="Свернуть документ">_</button><button aria-label="Восстановить документ">❐</button><button aria-label="Закрыть документ">✕</button></div>
  </nav>

  <main class="work">
    <section class="viewport">
      <p class="loadcase">Завантаження 1</p>
      <svg id="model" class="model" role="img" aria-label="Расчетная схема"></svg>
      <div class="dialog" role="dialog" aria-labelledby="dlg-title">
        <header><h2 id="dlg-title">Усилия в узлах пластин</h2><button aria-label="Закрыть"><svg viewBox="0 0 10 10"><path d="M1 1l8 8M9 1L1 9"/></svg></button></header>
        <div class="field"><textarea aria-labelledby="dlg-title">1501-3000</textarea><div class="updown"><i class="chev up"></i><i class="chev"></i></div></div>
        <footer>
          <button aria-label="Добавить"><svg><use href="#plus"/></svg></button>
          <button aria-label="Исключить"><svg><use href="#scis"/></svg></button>
          <button aria-label="Фильтр"><svg><use href="#funnelR"/></svg></button>
          <button aria-label="Справка"><svg><use href="#help"/></svg></button>
        </footer>
      </div>
    </section>
    <aside class="dock">
      <header><h2>Книга отчетов</h2><span>⇩</span><button aria-label="Закрыть панель">✕</button></header>
      <div class="docktools"><div class="strip">
        <button class="ib" aria-label="Снимок"><svg><use href="#camera"/></svg></button><i class="dd"></i>
        <button class="ib" aria-label="Вверх"><svg><use href="#folderUp"/></svg></button>
        <button class="ib" aria-label="Новая страница"><svg><use href="#sheetNew"/></svg></button><i class="dd"></i>
        <button class="ib" aria-label="Сохранить книгу"><svg><use href="#disk"/></svg></button>
        <button class="ib" aria-label="Вырезать"><svg><use href="#cutGray"/></svg></button>
        <button class="ib" aria-label="Копировать"><svg><use href="#copy"/></svg></button>
        <button class="ib" aria-label="Вставить"><svg><use href="#paste"/></svg></button>
        <button class="ib" aria-label="Удалить"><svg><use href="#trash"/></svg></button>
        <button class="ib" aria-label="Печать"><svg><use href="#printR"/></svg></button><i class="dd"></i>
      </div></div>
      <div class="pages">
        <div class="cards">
          <figure><svg class="thumb" data-kind="solid"></svg><figcaption>Завантаження 1</figcaption></figure>
          <figure><svg class="thumb" data-kind="top"></svg><figcaption>Площа повної арматури на 1пм<br>уздовж осі Y біля верхньої грані</figcaption></figure>
          <figure><svg class="thumb" data-kind="top2"></svg><figcaption>Площа повної арматури на 1пм<br>уздовж осі Y біля верхньої грані(2)</figcaption></figure>
          <figure><svg class="thumb" data-kind="bottom"></svg><figcaption>Площа повної арматури на 1пм<br>уздовж осі Y біля нижньої гра...</figcaption></figure>
          <figure><svg class="thumb" data-kind="wire"></svg></figure>
        </div>
        <div class="scroll"><i class="chev up"></i><span class="thumbbar"></span><i class="chev"></i></div>
      </div>
    </aside>
  </main>

  <div class="toolbars">
    <div class="strip s1"><i class="grip"></i>
      <button class="ib" aria-label="Полигон"><svg><use href="#poly"/></svg></button>
      <button class="ib" aria-label="Отметка узлов"><svg><use href="#target"/></svg></button><i class="dd"></i>
      <button class="ib" aria-label="Сетка"><svg><use href="#grid"/></svg></button>
      <button class="ib on dropdown" aria-label="Горизонтальные"><svg><use href="#cH"/></svg><i class="dd"></i></button>
      <button class="ib" aria-label="Вертикальные стержни"><svg><use href="#cV2"/></svg></button>
      <button class="ib" aria-label="Горизонтальные стержни"><svg><use href="#cH2"/></svg></button>
      <button class="ib" aria-label="Направление"><svg><use href="#cArr"/></svg></button>
      <button class="ib" aria-label="Решетка"><svg><use href="#cHash"/></svg></button><i class="dd"></i>
      <button class="ib" aria-label="Жесткость EF"><svg><use href="#cEF"/></svg></button><i class="dd"></i>
      <button class="ib" aria-label="Линия"><svg><use href="#cPen"/></svg></button><i class="dd"></i>
      <button class="ib" aria-label="Нагрузки"><svg><use href="#loads"/></svg></button>
      <button class="ib" aria-label="Фильтр"><svg><use href="#funnel"/></svg></button>
      <button class="ib" aria-label="Инверсия"><svg><use href="#swap"/></svg></button>
      <button class="ib" aria-label="Рама"><svg><use href="#frameR"/></svg></button>
      <button class="ib" aria-label="Дерево"><svg><use href="#tree"/></svg></button><i class="bar"></i>
      <button class="ib" aria-label="Фрагмент"><svg><use href="#cutX"/></svg></button>
      <button class="ib" aria-label="Контур"><svg><use href="#frameG"/></svg></button>
      <button class="ib" aria-label="Узел фрагмента"><svg><use href="#cutN"/></svg></button>
      <button class="ib" aria-label="Возврат"><svg><use href="#frameG"/></svg></button>
      <button class="ib" aria-label="Рамы"><svg><use href="#frames"/></svg></button>
      <button class="ib" aria-label="Слои"><svg><use href="#framesR"/></svg></button><i class="bar"></i>
      <button class="ib" aria-label="Увеличить"><svg><use href="#zoom"/></svg></button>
      <button class="ib" aria-label="Сбросить масштаб"><svg><use href="#zoomX"/></svg></button><i class="bar"></i>
      <button class="ib" aria-label="Подсветка"><svg><use href="#torch"/></svg></button>
      <button class="ib" aria-label="Узлы"><svg><use href="#dots"/></svg></button><i class="dd"></i>
      <button class="ib" aria-label="Карандаш"><svg><use href="#pencil"/></svg></button>
      <button class="ib" aria-label="Флаги"><svg><use href="#flag"/></svg></button>
    </div>
    <div class="strip s2"><i class="grip"></i>
      <button class="ib" aria-label="Оси"><svg><use href="#ax"/></svg></button>
      <button class="ib on" aria-label="Изометрия"><svg><use href="#iso"/></svg></button>
      <button class="ib txt"><svg><use href="#axP"/></svg>XZ</button><i class="dd"></i>
      <button class="ib txt"><svg><use href="#axP"/></svg>XY</button><i class="dd"></i>
      <button class="ib txt"><svg><use href="#axP"/></svg>YZ</button><i class="dd"></i>
      <button class="ib" aria-label="Плоскость"><svg><use href="#plane"/></svg></button>
      <button class="ib" aria-label="Поворот"><svg><use href="#rot"/></svg></button><i class="dd"></i>
      <button class="ib" aria-label="Локальные оси"><svg><use href="#axR"/></svg></button>
    </div>
    <div class="strip s3"><i class="grip"></i>
      <button class="ib on" aria-label="3D"><svg><use href="#box3"/></svg></button>
      <button class="ib" aria-label="Сверху"><svg><use href="#boxTop"/></svg></button>
      <button class="ib" aria-label="Сзади"><svg><use href="#boxBack"/></svg></button>
      <button class="ib" aria-label="Слева"><svg><use href="#boxL"/></svg></button>
      <button class="ib" aria-label="Габарит"><svg><use href="#boxAll"/></svg></button>
      <button class="ib" aria-label="Справа"><svg><use href="#boxR"/></svg></button>
      <button class="ib" aria-label="Спереди"><svg><use href="#boxFront"/></svg></button>
      <button class="ib" aria-label="Снизу"><svg><use href="#boxBot"/></svg></button>
      <button class="ib" aria-label="Куб"><svg><use href="#boxIso"/></svg></button>
    </div>
  </div>

  <footer class="status">
    <p>Задание пластин для вычисления усилий и напряжений в узлах пластин</p>
    <div class="state">
      <button class="ib" aria-label="Схема нагружения"><svg><use href="#stateIc"/></svg></button>
      <button class="ib" aria-label="Следующее"><i class="tri"></i></button>
      <button class="ib" aria-label="Предыдущее"><i class="tri down"></i></button>
      <select aria-label="Загружение"><option>1.</option></select>
      <button class="ib pad" aria-label="Монтаж"><svg><use href="#hammer"/></svg></button>
      <select aria-label="Стадия"><option>1.</option></select>
      <output>Уз.: 0 / 3200</output><output>Эл.: 1500 / 3000</output><output>Загр.: 1 / 1</output>
    </div>
  </footer>
</div>
<script src="script.js"></script>
</body>
</html>
```
FILE: styles.css
```css
* { box-sizing: border-box; }
body { margin: 0; font: 9px/12px "Noto Sans", "Open Sans", sans-serif; color: #333; background: #525252; }
button { border: 0; padding: 0; margin: 0; background: none; font: inherit; color: inherit; display: flex; align-items: center; white-space: nowrap; }
h1, h2, p, ul, figure { margin: 0; padding: 0; font-size: inherit; font-weight: normal; }
ul { list-style: none; }
i { font-style: normal; }
.sprite { position: absolute; width: 0; height: 0; }

.app { position: relative; height: 100vh; display: flex; flex-direction: column; border-left: 1px solid #2f7fc4; overflow: hidden; }

.ib { flex: none; width: 15px; height: 16px; justify-content: center; }
.ib svg { width: 13px; height: 13px; }
.ib.on { background: linear-gradient(#fbd9a0, #ffb95c 50%, #ffe08a); outline: 1px solid #e0ad5e; outline-offset: -1px; }
.dd { flex: none; width: 7px; height: 3px; background: #333; clip-path: polygon(20% 0, 80% 0, 50% 100%); }
.grip { flex: none; width: 2px; height: 12px; margin: 0 1px 0 2px; background: repeating-linear-gradient(#eee 0 1px, #555 1px 3px); }

/* title */
.titlebar { flex: none; height: 23px; background: #0078d7; display: flex; align-items: stretch; position: relative; }
.quick { display: flex; align-items: center; padding: 1px 0 0 42px; }
.quick .dd { background: #0b3866; }
.quick .last { margin-left: 12px; }
.title { position: absolute; left: 388px; top: 6px; font-size: 10px; font-weight: bold; color: #000; }
.context { position: absolute; left: 730px; top: 0; width: 108px; height: 23px; line-height: 24px; text-align: center; color: #13233a; background: linear-gradient(#0a7cd4, #2592b8 50%, #57b56d); }
.wincontrols { margin-left: auto; display: flex; }
.wincontrols button { width: 39px; justify-content: center; }
.wincontrols svg, .dialog header svg { width: 10px; height: 10px; fill: none; stroke: #fff; }
.orb { position: absolute; z-index: 3; left: 7px; top: 5px; width: 26px; height: 26px; border-radius: 50%; background: radial-gradient(circle at 50% 35%, #fff, #d5dadd 60%, #8b959c); border: 1px solid #5b6a78; }
.orb svg { width: 24px; height: 24px; }

/* ribbon tabs */
.tabs { flex: none; height: 20px; display: flex; padding-left: 43px; color: #eee; background: #525252; }
.tabs button { padding: 0 10px; }
.tabs .active { color: #222; background: linear-gradient(#fff, #d6dae2); border-radius: 2px 2px 0 0; }
.tabs > .ctx { position: absolute; left: 730px; width: 108px; height: 20px; justify-content: center; background: linear-gradient(#4d5950, #525252); border: 1px solid #606060; border-width: 0 1px; }
.tabs-right { margin-left: auto; display: flex; align-items: center; }
.tabs-right > button { padding: 0 6px; }
.q { color: #2f4c90; margin: 0 10px 0 13px; font-size: 12px; }
.mdi { margin-left: auto; display: flex; font-size: 8px; color: #bbb; }
.mdi button, .tabs .mdi button { width: 16px; padding: 0; justify-content: center; }

/* ribbon */
.ribbon { flex: none; height: 71px; margin: 0 1px; padding: 1px; display: flex; gap: 2px; border: 1px solid #f4f6f8; border-radius: 3px; background: linear-gradient(#d0d4dd 0 9px, #b3b7c4 11px, #e5f0ef 60px); }
.group { flex: none; display: flex; flex-direction: column; border: 1px solid #d8dce2; border-right-color: #8f949c; border-radius: 2px; background: linear-gradient(#d6dae2 0 8px, #bcc0cb 10px, #e7f0ef 55px); }
.group h2 { flex: none; height: 14px; line-height: 14px; text-align: center; color: #fff; background: linear-gradient(#aeb0b2, #939597); }
.body { flex: 1; min-height: 0; display: flex; justify-content: space-around; padding-top: 2px; }
.g-blocks { width: 110px; } .g-scheme { width: 116px; } .g-super { width: 239px; } .g-soil { width: 31px; } .g-bridge { width: 44px; } .g-analysis { width: 151px; } .g-tables { width: 51px; } .g-tools { width: 97px; }
.big { flex-direction: column; justify-content: flex-start; gap: 1px; color: #222; }
.big > svg { width: 21px; height: 21px; margin-top: 1px; }
.big span { display: block; line-height: 13px; text-align: center; }
.big .dd { display: inline-block; vertical-align: 4px; }
.s { display: block; height: 22px; font: bold 24px/22px "Liberation Serif", serif; color: #2b8440; }
.s sup { font: bold 20px/8px "Liberation Sans", sans-serif; color: #d8323a; vertical-align: 7px; }
.s.small { font-size: 14px; line-height: 16px; }
.s.small svg { width: 20px; height: 20px; vertical-align: top; }
.s.dark { font-size: 14px; color: #3a3148; line-height: 26px; }
.s.dark svg { width: 19px; height: 20px; vertical-align: top; }
.col { display: flex; flex-direction: column; }
.col.line { border-left: 1px solid #a8acb6; padding-left: 3px; margin-bottom: 2px; }
.sm { height: 16px; gap: 1px; }
.sm svg { width: 13px; height: 13px; }
.sm span { width: 13px; font-size: 10px; text-align: center; color: #333c50; }
.sm sub { font-size: 7px; line-height: 1px; vertical-align: -2px; }

/* menu bar */
.menubar { flex: none; height: 21px; display: flex; align-items: center; color: #eee; background: #525252; position: relative; }
.menubar > button { padding: 0 4px 0 5px; height: 19px; }
.app-icon { width: 14px; height: 14px; margin: 0 0 0 3px; }
.open { position: relative; height: 19px; background: linear-gradient(#6d7584, #8d95a4); }
.open > button { height: 19px; padding: 0 4px 0 5px; color: #111; }
.after { margin-left: 3px; }
.menubar > .mdi { margin-right: 1px; }
.menu { position: absolute; z-index: 5; left: 0; top: 18px; width: 364px; padding: 0 1px 2px; color: #444; border: 1px solid #9aa0a8; background: linear-gradient(to right, #ececec 20px, #d0d0d0 20px 21px, #fafafa 21px); box-shadow: 1px 1px 2px #555; }
.menu button { width: 100%; height: 17px; }
.menu button:disabled { color: #aaa; }
.menu svg { flex: none; width: 13px; height: 13px; margin: 0 7px 0 3px; }
.menu .sep { padding-top: 6px; background: linear-gradient(#d8d8d8, #d8d8d8) 25px 3px / 100% 1px no-repeat; }
.menu .major { padding-top: 7px; }
.menu kbd { margin-left: auto; padding-right: 9px; font: inherit; }
.menu .hot { background: linear-gradient(#fff8d8, #ffe793 45%, #ffce2f 55%, #ffe596); }
.menu .hot svg { width: 17px; height: 17px; padding: 2px; margin: 0 5px 0 1px; background: #ffdc96; outline: 1px solid #e5ab55; outline-offset: -1px; }
.sub { margin-left: auto; margin-right: 5px; border-left: 5px solid #222; border-top: 4px solid transparent; border-bottom: 4px solid transparent; }

/* work area */
.work { flex: 1; min-height: 0; display: flex; gap: 3px; }
.viewport { flex: 1; position: relative; background: #fff; border-left: 1px solid #fff; overflow: hidden; }
.loadcase { position: absolute; left: 2px; top: 2px; font: 8px/10px "Liberation Serif", serif; color: #000; }
.model { display: block; width: 100%; height: 100%; font: bold 12px "Liberation Sans", sans-serif; }
.dialog { position: absolute; left: 601px; top: 147px; width: 199px; padding: 0 3px 2px; font-size: 10px; background: #f0f0f0; border: 1px solid #a8a8a8; box-shadow: 0 1px 5px #aaa; }
.dialog header { display: flex; justify-content: space-between; align-items: center; height: 25px; margin: 0 -3px; padding: 0 9px 0 6px; background: #fff; color: #999; }
.dialog header svg { stroke: #888; }
.field { display: flex; height: 61px; margin-top: 7px; border: 1px solid #999; }
.field textarea { flex: 1; min-width: 0; border: 0; outline: 0; resize: none; overflow: hidden; padding: 1px 6px; font: bold 9px/12px "Noto Sans", sans-serif; color: #333; background: #f0f0f0; }
.updown { width: 15px; display: flex; flex-direction: column; justify-content: space-between; align-items: center; padding: 6px 0; border-left: 1px solid #fff; }
.chev { width: 6px; height: 6px; margin-top: -3px; border: solid #aaa; border-width: 0 1px 1px 0; transform: rotate(45deg); }
.chev.up { margin: 0 0 -3px; transform: rotate(225deg); }
.dialog footer { display: flex; justify-content: flex-end; gap: 5px; margin-right: -2px; padding-top: 5px; }
.dialog footer button { width: 25px; height: 18px; justify-content: center; background: #e2e2e2; border: 1px solid #b0b0b0; }
.dialog footer svg { width: 13px; height: 13px; }

/* report book */
.dock { flex: none; width: 412px; display: flex; flex-direction: column; background: #525252; }
.dock header { flex: none; height: 18px; display: flex; align-items: center; gap: 4px; padding: 0 3px 0 2px; color: #444; background: #9fa09f; }
.dock header h2 { flex: 1; }
.dock header span, .dock header button { font-size: 8px; }
.docktools { flex: none; height: 19px; padding-bottom: 1px; }
.docktools .strip { width: 161px; padding-left: 2px; }
.strip { height: 18px; display: flex; align-items: center; background: linear-gradient(#cdd1da, #a4a9b4); }
.pages { flex: 1; min-height: 0; display: flex; background: #fff; border-right: 1px solid #ddd; }
.cards { flex: 1; overflow: hidden; display: grid; grid-template-columns: 171px 171px; grid-auto-rows: 171px; padding: 9px 0 0 1px; }
.cards figure { text-align: center; line-height: 13px; color: #222; }
.thumb { display: block; width: 150px; height: 140px; margin: 0 auto; overflow: visible; font: bold 6px "Liberation Sans", sans-serif; }
.cards figcaption { white-space: nowrap; font-size: 10px; margin: 0 -5px; }
.scroll { width: 14px; margin-top: 9px; display: flex; flex-direction: column; align-items: center; background: #f0f0f0; }
.scroll .chev { flex: none; margin: 4px 0 7px; border-color: #444; }
.scroll .chev.up { margin: 6px 0 3px; }
.thumbbar { width: 14px; flex: 1; margin-bottom: 18px; background: #cdcdcd; }

/* bottom toolbars */
.toolbars { flex: none; height: 19px; display: flex; gap: 7px; align-items: flex-start; background: #525252; }
.toolbars .strip { border-radius: 0 3px 3px 0; }
.toolbars .s1 { width: 479px; padding-right: 3px; justify-content: space-between; }
.toolbars .s2 { width: 162px; padding-right: 4px; justify-content: space-between; }
.toolbars .s3 { width: 150px; padding-right: 8px; justify-content: space-between; }
.toolbars .dropdown { width: 22px; }
.toolbars .txt { width: 14px; font-size: 7px; }
.toolbars .txt svg { width: 6px; }
.bar { flex: none; width: 1px; height: 12px; margin: 0 2px; background: #eee; }

/* status */
.status { flex: none; height: 18px; display: flex; justify-content: space-between; align-items: center; color: #eee; background: linear-gradient(#3c3e48, #2b2b2b 30%); }
.status p { padding-left: 1px; }
.state { width: 400px; height: 18px; display: flex; align-items: center; padding-left: 4px; color: #222; background: linear-gradient(#aaa, #858585); border-top: 1px solid #ccc; }
.state .ib { background: #d8e2e2; width: 16px; }
.state .pad { margin-left: 5px; }
.state select { flex: none; width: 37px; height: 17px; padding: 0 3px; font: inherit; border: 1px solid #999; border-radius: 0; appearance: none; color: #222; background: #fff linear-gradient(#444, #444) 29px 7px / 3px 2px no-repeat; }
.state output { flex: none; width: 87px; height: 17px; line-height: 17px; padding-left: 3px; margin-left: 3px; border-left: 1px solid #444; white-space: nowrap; }
.state output:last-child { flex: 1; }
.tri { border: 4px solid transparent; border-top: 0; border-bottom: 7px solid #3a7a3a; }
.tri.down { border-bottom: 0; border-top: 7px solid #888; }
```
FILE: script.js
```js
const NS = "http://www.w3.org/2000/svg";

function add(parent, name, attrs, text) {
  const el = document.createElementNS(NS, name);
  for (const key in attrs) el.setAttribute(key, attrs[key]);
  if (text) el.textContent = text;
  parent.append(el);
  return el;
}

// Path of the lines of an nu x nv grid on the parallelogram p, p+u, p+v.
function gridLines(p, u, v, nu, nv) {
  let across = "", along = "";
  for (let i = 0; i <= nu; i++) {
    const x = p[0] + u[0] * i / nu, y = p[1] + u[1] * i / nu;
    across += `M${x} ${y}l${v[0]} ${v[1]}`;
  }
  for (let j = 0; j <= nv; j++) {
    const x = p[0] + v[0] * j / nv, y = p[1] + v[1] * j / nv;
    along += `M${x} ${y}l${u[0]} ${u[1]}`;
  }
  return [across, along];
}

function nodes(p, u, v, nu, nv, size) {
  let d = "";
  for (let i = 0; i <= nu; i++) for (let j = 0; j <= nv; j++) {
    const x = Math.round(p[0] + u[0] * i / nu + v[0] * j / nv - size / 2);
    const y = Math.round(p[1] + u[1] * i / nu + v[1] * j / nv - size / 2);
    d += `M${x} ${y}h${size}v${size}h-${size}z`;
  }
  return d;
}

function building(svg, x, y, c) {
  const u = [110, -36], h = [0, 245], d = [110, 64];
  const wall = (px, py) => {
    const [a, b] = gridLines([px, py], u, h, 15, 30);
    add(svg, "path", { d: b, stroke: c.line, "stroke-width": c.row, fill: "none" });
    add(svg, "path", { d: a, stroke: c.line, "stroke-width": 2.2, fill: "none" });
    add(svg, "path", { d: `M${px} ${py}v245l110 -36v-245z`, stroke: c.edge, "stroke-width": 2, fill: "none" });
    add(svg, "path", { d: nodes([px, py], u, h, 15, 30, c.dot), fill: c.node });
    add(svg, "path", { d: nodes([px, py], u, h, 15, 1, 3), fill: "#00f" });
  };
  const slab = py => {
    const [a, b] = gridLines([x, py], u, d, 15, 30);
    add(svg, "path", { d: a + b, stroke: c.slab, "stroke-width": 1.6, fill: "none" });
    add(svg, "path", { d: `M${x} ${py}l110 -36l110 64l-110 36z`, stroke: c.edge, "stroke-width": 2, "stroke-dasharray": "6 1", fill: "none" });
    add(svg, "path", { d: nodes([x, py], u, d, 15, 15, c.dot), fill: c.node });
  };
  wall(x, y);
  slab(y + 82);
  slab(y + 163);
  wall(x + 110, y + 64);
}

const model = document.getElementById("model");
building(model, 69, 235, { line: "#7474b8", row: 1.6, edge: "#000078", slab: "#4c4c9c", node: "#00f000", dot: 2 });
building(model, 312, 154, { line: "#f40000", row: 2, edge: "#f00000", slab: "#f01010", node: "#9a4a00", dot: 1 });

const axes = [["#f00", "M27 500v-10M24 493l3-4 3 4", "Z", 23, 484], ["#00f", "M27 500l-7-4M24 494l-5 1 2 4", "Y", 11, 493], ["#008000", "M27 500l10-4M33 495l5 0-2 4", "X", 36, 495]];
for (const [color, d, name, x, y] of axes) {
  add(model, "path", { d, stroke: color, "stroke-width": 1.5, fill: "none" });
  add(model, "text", { x, y, fill: color }, name);
}

// L-shaped plate: wall coloured by rows plus a floor.
function plate(svg, x, y, k, rows, floor, line) {
  const n = rows.length, h = 25 * k / n;
  rows.forEach((fill, i) => {
    const w = i === n - 1 ? 9 : 25;
    add(svg, "path", { d: `M${x} ${y + h * i}l${w * k} ${-6 * k * w / 25}v${h}l${-w * k} ${6 * k * w / 25}z`, fill });
  });
  add(svg, "path", { d: `M${x + 6 * k} ${y + 19 * k}l${21 * k} ${-5 * k}l${14 * k} ${9 * k}l${-24 * k} ${5 * k}z`, fill: floor });
  const [a, b] = gridLines([x, y], [25 * k, -6 * k], [0, 15 * k], 5, 3);
  const [c, d] = gridLines([x + 6 * k, y + 19 * k], [21 * k, -5 * k], [12 * k, 9 * k], 6, 4);
  add(svg, "path", { d: a + b + c + d + `M${x} ${y + 20 * k}v${6 * k}l${8 * k} ${-4 * k}`, stroke: line, "stroke-width": 1, fill: "none" });
}

function legend(svg) {
  add(svg, "path", { d: "M15 37h122v3h-122z", fill: "#333" });
  ["#80806c", "#80802a", "#806c08", "#804a10", "#802c14", "#781018", "#581010", "#280808"].forEach((fill, i) =>
    add(svg, "path", { d: `M${15 + i * 15.3} 37h14v2h-14z`, fill }));
  add(svg, "path", { d: "M8 40h15", stroke: "#7aba7a", "stroke-dasharray": "2 1" });
  add(svg, "path", { d: "M8 43h22M8 45h10", stroke: "#aaa", "stroke-dasharray": "2 1" });
  add(svg, "path", { d: "M8 101h42", stroke: "#999", "stroke-dasharray": "2 1" });
}

for (const svg of document.querySelectorAll(".thumb")) {
  const kind = svg.dataset.kind;
  const cream = "#f2f6cc", pale = "#d8f0c0", dark = "#7a1410", red = "#e05020", yellow = "#fbd84a", green = "#138a1c";
  if (kind === "solid") {
    add(svg, "path", { d: "M52 56l18-5v11l6 5 9-4v34l-18 5V92l-5-4-10 3z", fill: "#00002c" });
    const [a, b] = gridLines([53, 58], [16, -5], [0, 32], 5, 9);
    const [c, e] = gridLines([67, 69], [17, -5], [0, 32], 5, 9);
    add(svg, "path", { d: a + b + c + e, stroke: "#1a1a96", "stroke-width": .4, fill: "none" });
    add(svg, "path", { d: "M91 43l18-6v12l5 5 9-3v34l-18 6V81l-5-5-9 3z", fill: "#f00" });
    add(svg, "path", { d: "M94 50v24M101 48v20M107 43v20M110 62v22M118 62v22", stroke: "#ffb0b0", "stroke-width": .6, "stroke-dasharray": "1 5" });
    add(svg, "path", { d: "M8 37h7", stroke: "#888", "stroke-dasharray": "2 1" });
  } else if (kind === "top") {
    const rows = [cream, cream, cream, dark, yellow];
    legend(svg);
    plate(svg, 12, 62, 1, rows, "#e8f0b8", green);
    plate(svg, 93, 46, 1, rows, "#e8f0b8", green);
  } else if (kind === "top2") {
    legend(svg);
    plate(svg, 21, 68, .87, [pale, pale, pale, dark, yellow], pale, green);
    plate(svg, 89, 47, .87, [pale, pale, pale, dark, red], pale, green);
  } else if (kind === "bottom") {
    legend(svg);
    plate(svg, 21, 68, .87, [pale, pale, pale, pale, pale], pale, green);
    plate(svg, 89, 47, .87, [pale, pale, pale, pale, pale], pale, green);
    for (const [x, y, tone] of [[21, 68, "#f05050"], [89, 47, "#7a1410"]]) {
      add(svg, "path", { d: `M${x} ${y}l22-5v12l-22 5z`, fill: "#e36a18" });
      add(svg, "path", { d: `M${x} ${y + 8}l22-5v9l-22 5z`, fill: tone });
      const [a, b] = gridLines([x, y], [22, -5], [0, 17], 5, 4);
      add(svg, "path", { d: a + b, stroke: "#5a1a10", "stroke-width": .8, fill: "none" });
    }
  } else {
    add(svg, "path", { d: "M8 38h16", stroke: "#7aba7a", "stroke-dasharray": "2 1" });
    for (const [x, y] of [[36, 75], [81, 52]]) {
      const [a, b] = gridLines([x, y], [14, -7], [0, 20], 4, 5);
      const [c, d] = gridLines([x + 2, y + 17], [14, -5], [19, 6], 5, 6);
      add(svg, "path", { d: a + b + c + d + `M${x} ${y + 20}v6l6-4`, stroke: "#10107a", "stroke-width": 1, fill: "none" });
    }
  }
  add(svg, "path", { d: "M10 98l2-3", stroke: "#c33", "stroke-width": 1.5 });
  add(svg, "path", { d: "M12 95l2 3", stroke: "#3a5", "stroke-width": 1.5 });
  add(svg, "path", { d: "M8.500 112.500h13v13M21 136.500H8.500v-24M17 136.500h4.500v-4", fill: "none", stroke: "#333", "stroke-width": 1.300 });
  add(svg, "path", { d: "M11 115h5l2 5h-6zM11 119l3-1 6 3 0 4-4 2-5-3z", fill: "#c3ccd4", stroke: "#56616c", "stroke-width": .700 });
  add(svg, "path", { d: "M12 127h7v9h-7z", fill: "#eef2fb", stroke: "#6a7cb0" });
  add(svg, "text", { x: 13, y: 134, fill: "#333" }, "A");
  add(svg, "text", { x: 21, y: 133, fill: "#222" }, "A4 210x297");
  add(svg, "use", { href: "#bolt", x: 131, y: 1, width: 10, height: 11 });
}
```
